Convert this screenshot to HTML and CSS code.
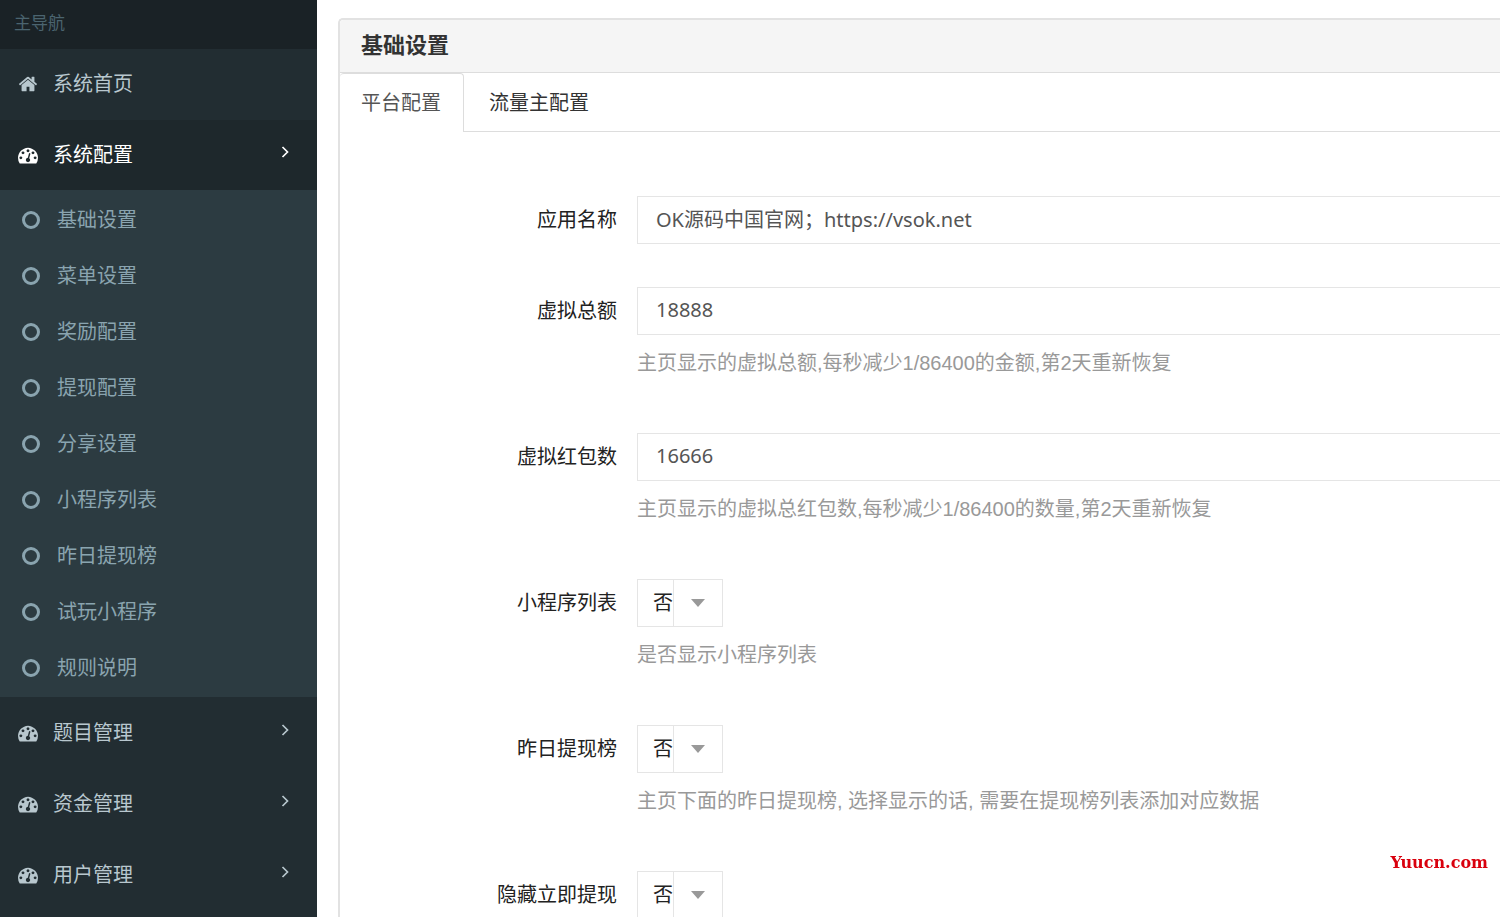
FILE: index.html
```
<!DOCTYPE html>
<html lang="zh-CN">
<head>
<meta charset="utf-8">
<meta name="viewport" content="width=device-width, initial-scale=1">
<title>基础设置</title>
<link rel="stylesheet" href="styles.css">
</head>
<body>
<svg class="sprite" aria-hidden="true">
  <symbol id="icon-home" viewBox="0 0 1664 1792">
    <path d="M1408 992v480q0 26-19 45t-45 19h-384v-384h-256v384h-384q-26 0-45-19t-19-45v-480q0-1 .5-3t.5-3l575-474 575 474q1 2 1 6zm223-69l-62 74q-8 9-21 11h-3q-13 0-21-7l-692-577-692 577q-12 8-24 7-13-2-21-11l-62-74q-8-10-7-23.500t11-21.500l719-599q32-26 76-26t76 26l244 204v-195q0-14 9-23t23-9h192q14 0 23 9t9 23v408l219 182q10 8 11 21.500t-7 23.500z"/>
  </symbol>
  <symbol id="icon-gauge" viewBox="0 0 1792 1792">
    <path d="M384 1152q0-53-37.500-90.500t-90.500-37.500-90.500 37.500-37.500 90.500 37.500 90.500 90.500 37.500 90.500-37.500 37.500-90.500zm192-448q0-53-37.500-90.500t-90.500-37.500-90.500 37.500-37.500 90.500 37.500 90.500 90.500 37.500 90.500-37.500 37.500-90.500zm428 481l101-382q6-26-7.500-48.500t-38.500-29.500-48 6.500-30 39.500l-101 382q-60 5-107 43.500t-63 98.500q-20 77 20 146t117 89 146-20 89-117q16-60-6-117t-72-91zm660-33q0-53-37.500-90.500t-90.500-37.500-90.500 37.500-37.500 90.500 37.500 90.500 90.500 37.500 90.500-37.500 37.500-90.500zm-640-640q0-53-37.500-90.500t-90.500-37.500-90.500 37.500-37.500 90.500 37.500 90.500 90.500 37.500 90.500-37.500 37.500-90.500zm448 192q0-53-37.500-90.500t-90.500-37.500-90.500 37.500-37.500 90.500 37.500 90.500 90.500 37.500 90.500-37.500 37.500-90.500zm320 448q0 261-141 483-19 29-54 29h-1402q-35 0-54-29-141-221-141-483 0-182 71-348t191-286 286-191 348-71 348 71 286 191 191 286 71 348z"/>
  </symbol>
  <symbol id="icon-angle" viewBox="0 0 8 12">
    <path d="M1.500 1l5 5-5 5" fill="none" stroke="currentColor" stroke-width="1.700"/>
  </symbol>
</svg>
<div class="layout">
  <nav class="sidebar" aria-label="主导航">
    <h2 class="sidebar-title">主导航</h2>
    <ul class="menu">
      <li><a class="menu-link" href="#"><svg class="menu-icon"><use href="#icon-home"/></svg>系统首页</a></li>
      <li>
        <a class="menu-link is-active" href="#"><svg class="menu-icon"><use href="#icon-gauge"/></svg>系统配置<svg class="menu-angle"><use href="#icon-angle"/></svg></a>
        <ul class="submenu">
          <li><a class="submenu-link" href="#">基础设置</a></li>
          <li><a class="submenu-link" href="#">菜单设置</a></li>
          <li><a class="submenu-link" href="#">奖励配置</a></li>
          <li><a class="submenu-link" href="#">提现配置</a></li>
          <li><a class="submenu-link" href="#">分享设置</a></li>
          <li><a class="submenu-link" href="#">小程序列表</a></li>
          <li><a class="submenu-link" href="#">昨日提现榜</a></li>
          <li><a class="submenu-link" href="#">试玩小程序</a></li>
          <li><a class="submenu-link" href="#">规则说明</a></li>
        </ul>
      </li>
      <li><a class="menu-link" href="#"><svg class="menu-icon"><use href="#icon-gauge"/></svg>题目管理<svg class="menu-angle"><use href="#icon-angle"/></svg></a></li>
      <li><a class="menu-link" href="#"><svg class="menu-icon"><use href="#icon-gauge"/></svg>资金管理<svg class="menu-angle"><use href="#icon-angle"/></svg></a></li>
      <li><a class="menu-link" href="#"><svg class="menu-icon"><use href="#icon-gauge"/></svg>用户管理<svg class="menu-angle"><use href="#icon-angle"/></svg></a></li>
    </ul>
  </nav>
  <main class="content">
    <section class="panel">
      <h1 class="panel-title">基础设置</h1>
      <div class="tabs" role="tablist">
        <button class="tab is-current" type="button" role="tab" aria-selected="true">平台配置</button>
        <button class="tab" type="button" role="tab" aria-selected="false">流量主配置</button>
      </div>
      <form class="form">
        <div class="row">
          <label class="label" for="app-name">应用名称</label>
          <div class="field"><input class="input" id="app-name" type="text" value="OK源码中国官网；https://vsok.net"></div>
        </div>
        <div class="row">
          <label class="label" for="total">虚拟总额</label>
          <div class="field">
            <input class="input" id="total" type="text" value="18888">
            <p class="help">主页显示的虚拟总额,每秒减少1/86400的金额,第2天重新恢复</p>
          </div>
        </div>
        <div class="row">
          <label class="label" for="packets">虚拟红包数</label>
          <div class="field">
            <input class="input" id="packets" type="text" value="16666">
            <p class="help">主页显示的虚拟总红包数,每秒减少1/86400的数量,第2天重新恢复</p>
          </div>
        </div>
        <div class="row">
          <label class="label" for="show-list">小程序列表</label>
          <div class="field">
            <span class="picker"><select class="select" id="show-list"><option>否</option><option>是</option></select></span>
            <p class="help">是否显示小程序列表</p>
          </div>
        </div>
        <div class="row">
          <label class="label" for="show-rank">昨日提现榜</label>
          <div class="field">
            <span class="picker"><select class="select" id="show-rank"><option>否</option><option>是</option></select></span>
            <p class="help">主页下面的昨日提现榜, 选择显示的话, 需要在提现榜列表添加对应数据</p>
          </div>
        </div>
        <div class="row">
          <label class="label" for="hide-cash">隐藏立即提现</label>
          <div class="field">
            <span class="picker"><select class="select" id="hide-cash"><option>否</option><option>是</option></select></span>
          </div>
        </div>
      </form>
    </section>
  </main>
</div>
<div class="site-mark">Yuucn.com</div>
</body>
</html>
```
FILE: styles.css
```
*, *::before, *::after { box-sizing: border-box; }

html { height: 100%; }

body {
  height: 100%;
  margin: 0;
  overflow: hidden;
  background: #fff;
  color: #222;
  font: 20px/28px "Liberation Sans", "Noto Sans CJK SC", sans-serif;
}

ul { margin: 0; padding: 0; list-style: none; }
a { color: inherit; text-decoration: none; }
.sprite { display: none; }

.layout { display: flex; height: 100%; overflow: hidden; }

/* Sidebar */
.sidebar { flex: 0 0 317px; background: #222d32; color: #b8c7ce; }

.sidebar-title {
  margin: 0;
  padding: 10px 14px 11px;
  background: #1a2226;
  color: #4b646f;
  font-size: 17px;
  font-weight: 400;
}

.menu { display: flex; flex-direction: column; gap: 1px; }

.menu-link {
  display: flex;
  align-items: center;
  height: 70px;
  padding: 0 28px 0 18px;
}

.menu-link.is-active { background: #1e282c; color: #fff; }

.menu-icon { width: 20px; height: 20px; margin-right: 15px; fill: currentColor; }
.menu-angle { width: 8px; height: 12px; margin: 0 0 6px auto; }

.submenu { padding: 2px 0 1px; background: #2c3b41; color: #8aa4af; }

.submenu-link {
  display: flex;
  align-items: center;
  gap: 17px;
  height: 56px;
  padding-left: 22px;
}

.submenu-link::before {
  content: "";
  width: 18px;
  height: 18px;
  border: 3px solid;
  border-radius: 50%;
}

/* Content */
.content { flex: 1; min-width: 0; padding: 18px 0 0 21px; }

.panel {
  border: solid #e2e2e2;
  border-width: 2px 0 0 2px;
  border-radius: 5px 0 0 0;
}

.panel-title {
  margin: 0;
  padding: 12px 21px;
  border-bottom: 1px solid #ddd;
  border-radius: 4px 0 0 0;
  background: #f5f5f5;
  color: #333;
  font-size: 22px;
  font-weight: 700;
}

.tabs { display: flex; border-bottom: 1px solid #ddd; }

.tab {
  margin-bottom: -1px;
  padding: 15px 25px;
  border: 0;
  background: none;
  color: #333;
  font: inherit;
}

.tab.is-current {
  padding: 15px 22px 15px 21px;
  border: 1px solid #ddd;
  border-width: 1px 1px 0 0;
  border-radius: 4px 4px 0 0;
  background: #fff;
  color: #555;
}

.form { display: flex; flex-direction: column; gap: 43px; padding-top: 64px; }
.row { display: flex; }
.label { flex: 0 0 277px; padding: 10px 0 8px; text-align: right; }
.field { flex: 1; min-width: 0; margin-left: 20px; }

.input {
  display: block;
  width: 100%;
  height: 48px;
  padding: 0 18px 4px;
  border: 1px solid #e5e5e5;
  border-right: 0;
  background: #fff;
  color: #555;
  font: 20px/28px "Noto Sans", "Noto Sans CJK SC", sans-serif;
}

.picker { display: block; position: relative; width: 86px; }

.select {
  display: block;
  width: 100%;
  height: 48px;
  padding: 0 0 0 15px;
  border: 1px solid #e5e5e5;
  border-radius: 0;
  appearance: none;
  background: linear-gradient(#e5e5e5, #e5e5e5) 35px 0 / 1px 100% no-repeat #fff;
  color: #222;
  font: inherit;
}

.picker::after {
  content: "";
  position: absolute;
  top: 20px;
  right: 18px;
  border: solid transparent;
  border-width: 8px 7px 0;
  border-top-color: #999;
  pointer-events: none;
}

.help { margin: 14px 0 13px; color: #999; }

.site-mark {
  position: fixed;
  right: 12px;
  bottom: 40px;
  color: #d9000d;
  font: 700 16px/28px "DejaVu Serif", serif;
}
```
